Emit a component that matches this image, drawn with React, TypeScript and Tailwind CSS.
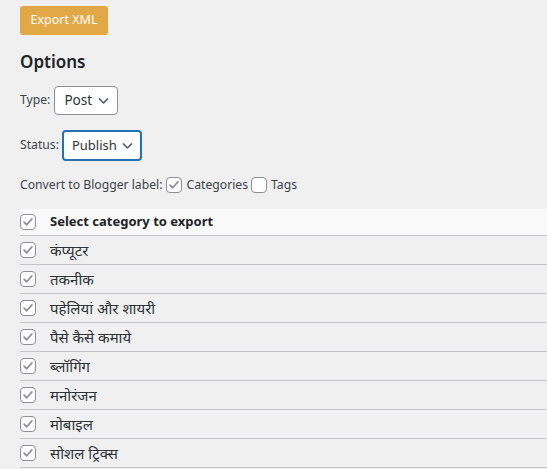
import { useState } from 'react';

const categories = [
  'कंप्यूटर',
  'तकनीक',
  'पहेलियां और शायरी',
  'पैसे कैसे कमाये',
  'ब्लॉगिंग',
  'मनोरंजन',
  'मोबाइल',
  'सोशल ट्रिक्स',
];

function Check({ checked, onChange }: { checked: boolean; onChange: () => void }) {
  return (
    <button
      type="button"
      onClick={onChange}
      className="flex h-4 w-4 shrink-0 items-center justify-center rounded-[4px] border border-[#8c8f94] bg-white"
    >
      {checked && (
        <svg viewBox="0 0 16 16" className="h-[14px] w-[14px]" fill="none">
          <path d="M3.5 8.2l3 3 6-6.8" stroke="#8c8f94" strokeWidth="1.9" strokeLinecap="round" strokeLinejoin="round" />
        </svg>
      )}
    </button>
  );
}

function Chevron() {
  return (
    <svg viewBox="0 0 16 16" className="h-[13px] w-[13px]" fill="none">
      <path d="M3 6l5 5 5-5" stroke="#50575e" strokeWidth="1.8" strokeLinecap="round" strokeLinejoin="round" />
    </svg>
  );
}

export default function App() {
  const [useCats, setUseCats] = useState(true);
  const [useTags, setUseTags] = useState(false);
  const [picked, setPicked] = useState<boolean[]>(categories.map(() => true));
  const allPicked = picked.every(Boolean);

  return (
    <div
      className="min-h-[469px] bg-[#f0f0f1] pl-5 pt-[6px] text-[12.2px] text-[#3c434a]"
      style={{ fontFamily: '"Noto Sans", "Liberation Sans", sans-serif' }}
    >
      <button
        type="button"
        className="flex h-[29px] w-[88px] items-center justify-center rounded-[3px] bg-[#e2a845] text-[12.5px] text-white"
      >
        Export XML
      </button>

      <h2 className="mt-[16px] text-[17px] font-semibold leading-[22px] text-[#1d2327]">Options</h2>

      <div className="mt-[13px] flex items-center gap-[4px]">
        <span>Type:</span>
        <div className="flex h-[29px] w-[64px] items-center justify-between rounded-[4px] border border-[#8c8f94] bg-white pl-[9px] pr-[7px] text-[13.5px] text-[#2c3338]">
          <span>Post</span>
          <Chevron />
        </div>
      </div>

      <div className="mt-[15px] flex items-center gap-[3px]">
        <span>Status:</span>
        <div className="flex h-[31px] w-[80px] items-center justify-between rounded-[4px] border-2 border-[#2271b1] bg-white pl-[8px] pr-[6px] text-[13px] text-[#2c3338]">
          <span>Publish</span>
          <Chevron />
        </div>
      </div>

      <div className="mt-[15px] flex h-[18px] items-center">
        <span>Convert to Blogger label:</span>
        <span className="ml-[4px]">
          <Check checked={useCats} onChange={() => setUseCats(!useCats)} />
        </span>
        <span className="ml-[4px]">Categories</span>
        <span className="ml-[3px]">
          <Check checked={useTags} onChange={() => setUseTags(!useTags)} />
        </span>
        <span className="ml-[4px]">Tags</span>
      </div>

      <div className="mt-[15px]">
        <div className="flex h-[27px] items-center border-b border-[#c3c4c7] bg-[#f9f9f9]">
          <Check checked={allPicked} onChange={() => setPicked(categories.map(() => !allPicked))} />
          <span className="ml-[14px] text-[13px] font-bold text-[#1d2327]">Select category to export</span>
        </div>
        {categories.map((name, i) => (
          <div key={name} className="flex h-[29px] items-center border-b border-[#c3c4c7]">
            <Check
              checked={picked[i]}
              onChange={() => setPicked(picked.map((v, j) => (j === i ? !v : v)))}
            />
            <span className="ml-[14px] text-[15px] text-[#2c3338]">{name}</span>
          </div>
        ))}
      </div>
    </div>
  );
}
